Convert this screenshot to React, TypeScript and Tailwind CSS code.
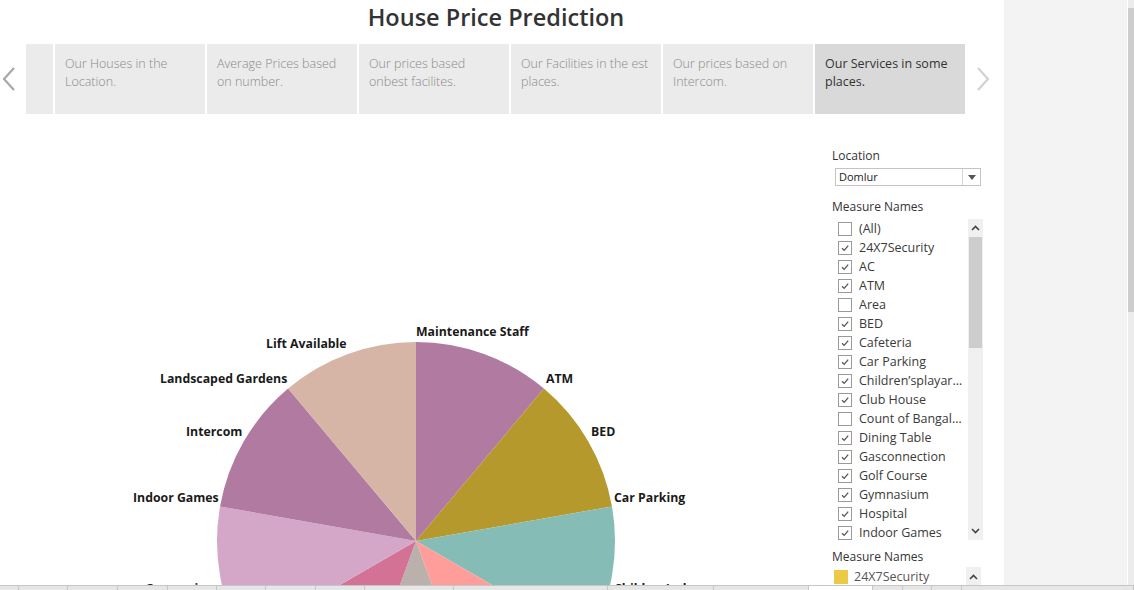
import React from "react";

const FONT = { fontFamily: '"Open Sans", "Noto Sans", sans-serif' };

const cards = [
  "Our Houses in the Location.",
  "Average Prices based on number.",
  "Our prices based onbest facilites.",
  "Our Facilities in the est places.",
  "Our prices based on Intercom.",
  "Our Services in some places.",
];

const items: [string, boolean][] = [
  ["(All)", false],
  ["24X7Security", true],
  ["AC", true],
  ["ATM", true],
  ["Area", false],
  ["BED", true],
  ["Cafeteria", true],
  ["Car Parking", true],
  ["Children\u2019splayarea", true],
  ["Club House", true],
  ["Count of Bangalore", false],
  ["Dining Table", true],
  ["Gasconnection", true],
  ["Golf Course", true],
  ["Gymnasium", true],
  ["Hospital", true],
  ["Indoor Games", true],
];

const sliceColors = [
  "#b07aa1",
  "#b6992d",
  "#86bcb6",
  "#ff9d9a",
  "#bab0ac",
  "#d37295",
  "#d4a6c8",
  "#b07aa1",
  "#d6b4a6",
];

const labels: [string, number, number][] = [
  ["Maintenance Staff", 416, 331],
  ["ATM", 546, 378],
  ["BED", 591, 431],
  ["Car Parking", 614, 497],
  ["Children\u2019splayarea", 614, 588],
  ["Lift Available", 266, 343],
  ["Landscaped Gardens", 160, 378],
  ["Intercom", 186, 431],
  ["Indoor Games", 133, 497],
  ["Gymnasium", 145, 588],
];

function Pie() {
  const cx = 416;
  const cy = 541 - 114;
  const r = 199;
  const pt = (deg: number) => {
    const a = (deg * Math.PI) / 180;
    return [cx + r * Math.sin(a), cy - r * Math.cos(a)];
  };
  return (
    <svg width="832" height="476" viewBox="0 0 832 476">
      {sliceColors.map((c, i) => {
        const [x1, y1] = pt(i * 40);
        const [x2, y2] = pt((i + 1) * 40);
        return (
          <path
            key={i}
            d={`M${cx},${cy} L${x1},${y1} A${r},${r} 0 0 1 ${x2},${y2} Z`}
            fill={c}
          />
        );
      })}
      {labels.map(([t, x, y]) => (
        <text
          key={t}
          x={x}
          y={y - 114 + 4.5}
          fontSize="12.3"
          fontWeight="700"
          fill="#1a1a1a"
          style={FONT}
        >
          {t}
        </text>
      ))}
    </svg>
  );
}

function Check({ on }: { on: boolean }) {
  return (
    <div className="w-[14px] h-[14px] border border-[#9a9a9a] bg-white flex items-center justify-center shrink-0">
      {on && (
        <svg width="10" height="10" viewBox="0 0 10 10">
          <path d="M2 5.2 L4.2 7.4 L8.2 2.6" fill="none" stroke="#555" strokeWidth="1.3" />
        </svg>
      )}
    </div>
  );
}

function Chevron({ dir, color }: { dir: "up" | "down"; color: string }) {
  return (
    <svg width="9" height="6" viewBox="0 0 9 6">
      <path
        d={dir === "up" ? "M1 5 L4.5 1.5 L8 5" : "M1 1 L4.5 4.5 L8 1"}
        fill="none"
        stroke={color}
        strokeWidth="1.6"
      />
    </svg>
  );
}

export default function App() {
  const strip = [19, 49, 50, 50, 49, 49, 50, 49, 89, 154, 106, 95, 64, 30, 29, 30, 172];
  return (
    <div className="w-[1134px] h-[590px] overflow-hidden flex flex-col bg-white" style={FONT}>
      <div className="flex flex-1 min-h-0">
        <div className="w-[1004px] flex flex-col bg-white">
          <div className="h-[44px] flex justify-center pr-[12px] shrink-0">
            <div className="text-[23.5px] leading-[34px] font-semibold text-[#333333]">
              House Price Prediction
            </div>
          </div>
          <div className="h-[70px] flex shrink-0">
            <div className="w-[26px] flex items-center pl-[1px]">
              <svg width="16" height="26" viewBox="0 0 16 26">
                <path d="M13 2 L3 13 L13 24" fill="none" stroke="#a8a8a8" strokeWidth="2.2" />
              </svg>
            </div>
            <div className="w-[27px] bg-[#ebebeb]" />
            {cards.map((c, i) => (
              <div
                key={c}
                className={`ml-[2px] w-[150px] pl-[10px] pr-[6px] pt-[11px] text-[12.5px] leading-[18px] ${
                  i === 5 ? "bg-[#d9d9d9] text-[#333333]" : "bg-[#ebebeb] text-[#8a8a8a] font-light"
                }`}
              >
                {c}
              </div>
            ))}
            <div className="flex-1 flex items-center pl-[10px]">
              <svg width="16" height="26" viewBox="0 0 16 26">
                <path d="M3 2 L13 13 L3 24" fill="none" stroke="#d2d2d2" strokeWidth="2.2" />
              </svg>
            </div>
          </div>
          <div className="flex flex-1 min-h-0">
            <div className="w-[832px] shrink-0">
              <Pie />
            </div>
            <div className="w-[172px] pt-[34px] text-[#333333]">
              <div className="text-[12px] leading-[16px] font-medium">Location</div>
              <div className="mt-[4px] ml-[3px] w-[146px] h-[18px] border border-[#c4c4c4] flex items-center">
                <div className="flex-1 pl-[3px] text-[11px] leading-[16px] text-[#222]">Domlur</div>
                <div className="w-[18px] h-full border-l border-[#d6d6d6] flex items-center justify-center">
                  <svg width="8" height="5" viewBox="0 0 8 5">
                    <path d="M0 0 L8 0 L4 5 Z" fill="#555" />
                  </svg>
                </div>
              </div>
              <div className="mt-[13px] text-[12px] leading-[16px] font-medium">Measure Names</div>
              <div className="mt-[4px] ml-[3px] h-[321px] flex">
                <div className="w-[133px] overflow-hidden">
                  {items.map(([t, on]) => (
                    <div key={t} className="h-[19px] flex items-center">
                      <div className="ml-[3px]">
                        <Check on={on} />
                      </div>
                      <div className="ml-[7px] w-[104px] truncate text-[12.5px] leading-[16px] text-[#3a3a3a]">
                        {t}
                      </div>
                    </div>
                  ))}
                </div>
                <div className="w-[15px] bg-[#f0f0f0] flex flex-col items-center">
                  <div className="h-[18px] flex items-center">
                    <Chevron dir="up" color="#444" />
                  </div>
                  <div className="w-[13px] h-[111px] bg-[#cdcdcd]" />
                  <div className="flex-1" />
                  <div className="h-[18px] flex items-center">
                    <Chevron dir="down" color="#444" />
                  </div>
                </div>
              </div>
              <div className="mt-[9px] text-[12px] leading-[16px] font-medium">Measure Names</div>
              <div className="mt-[2px] h-[19px] flex items-center">
                <div className="ml-[2px] w-[14px] h-[14px] bg-[#edc948]" />
                <div className="ml-[6px] w-[112px] text-[12.5px] leading-[16px] text-[#555]">24X7Security</div>
                <div className="w-[15px] h-[19px] bg-[#f0f0f0] flex items-center justify-center">
                  <Chevron dir="up" color="#444" />
                </div>
              </div>
            </div>
          </div>
        </div>
        <div className="w-[123px] bg-[#f3f3f3]" />
        <div className="w-[1px] bg-white" />
        <div className="flex-1 bg-[#ececec] flex flex-col">
          <div className="h-[8px]" />
          <div className="h-[304px] bg-[#cdcdcd]" />
        </div>
      </div>
      <div className="h-[5px] shrink-0 border-t border-[#c6c6c6] bg-[#e6e6e6] flex">
        {strip.map((w, i) => (
          <div
            key={i}
            className={`h-full border-r border-[#c6c6c6] ${i === 12 ? "bg-white" : ""}`}
            style={{ width: w }}
          />
        ))}
      </div>
    </div>
  );
}
